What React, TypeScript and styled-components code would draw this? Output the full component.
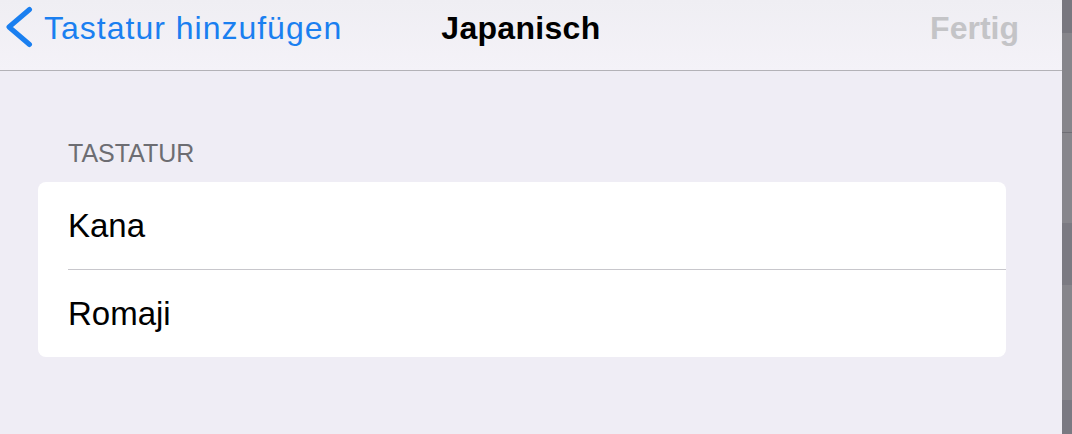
import styled, { createGlobalStyle } from "styled-components";

const GlobalStyle = createGlobalStyle`
  html, body, #root {
    margin: 0;
    height: 100%;
  }
  body {
    font-family: "Liberation Sans", Arial, sans-serif;
    background: #efedf5;
    overflow: hidden;
  }
`;

const keyboards = [
  { id: 1, label: "Kana" },
  { id: 2, label: "Romaji" },
];

// the dark edge on the right of the screen (the iPad split view behind)
const edgeBands = [
  { h: 33, tone: "#78777f" },
  { h: 99, tone: "#86858b" },
  { h: 1, tone: "#6f6e75" },
  { h: 90, tone: "#87868c" },
  { h: 62, tone: "#7b7a82" },
  { h: 115, tone: "#86858b" },
  { h: 34, tone: "#7a7982" },
];

const App = () => {
  return (
    <>
      <GlobalStyle />
      <Screen>
        <Main>
          <NavBar>
            <BackButton>
              <svg width="28" height="42" viewBox="0 0 28 42" fill="none">
                <path
                  d="M24.5 3.5 L4 21 L24.5 38.5"
                  stroke="#1a7ff0"
                  strokeWidth="5"
                  strokeLinecap="round"
                  strokeLinejoin="round"
                />
              </svg>
              <BackLabel>Tastatur hinzufügen</BackLabel>
            </BackButton>
            <Title>Japanisch</Title>
            <Spacer />
            <DoneButton>Fertig</DoneButton>
          </NavBar>

          <Content>
            <SectionHeader>TASTATUR</SectionHeader>
            <Card>
              {keyboards.map((item, i) => (
                <Row key={item.id} $last={i === keyboards.length - 1}>
                  {item.label}
                </Row>
              ))}
            </Card>
          </Content>
        </Main>

        <Edge>
          {edgeBands.map((band, i) => (
            <Band key={i} $h={band.h} $tone={band.tone} />
          ))}
        </Edge>
      </Screen>
    </>
  );
};

const Screen = styled.div`
  display: flex;
  height: 100%;
`;

const Main = styled.div`
  flex: 1;
  display: flex;
  flex-direction: column;
  background: #efedf5;
`;

const NavBar = styled.div`
  display: flex;
  align-items: flex-start;
  height: 71px;
  box-sizing: border-box;
  padding: 10px 43px 0 5px;
  background: linear-gradient(180deg, #efeef3 0%, #f4f2f8 100%);
  border-bottom: 1px solid #b3b2b7;
  flex-shrink: 0;
`;

const BackButton = styled.div`
  display: flex;
  align-items: flex-start;
  gap: 11px;
  color: #1a7ff0;

  svg {
    margin-top: -4px;
  }
`;

const BackLabel = styled.span`
  font-size: 32px;
  line-height: 36px;
  letter-spacing: 1px;
`;

const Title = styled.span`
  margin-left: 99px;
  font-size: 32px;
  line-height: 36px;
  font-weight: 700;
  color: #000;
  letter-spacing: 0.3px;
`;

const Spacer = styled.div`
  flex: 1;
`;

const DoneButton = styled.span`
  font-size: 32px;
  line-height: 36px;
  font-weight: 700;
  color: #c4c4c7;
`;

const Content = styled.div`
  padding: 67px 56px 0 38px;
`;

const SectionHeader = styled.div`
  padding-left: 30px;
  font-size: 25px;
  line-height: 30px;
  color: #6d6d72;
  margin-bottom: 14px;
`;

const Card = styled.div`
  background: #fff;
  border-radius: 8px;
  overflow: hidden;
`;

const Row = styled.div<{ $last: boolean }>`
  display: flex;
  align-items: center;
  height: 87px;
  margin-left: 30px;
  font-size: 33px;
  color: #000;
  border-bottom: ${(p) => (p.$last ? "none" : "1px solid #c8c7cc")};
`;

const Edge = styled.div`
  width: 10px;
  display: flex;
  flex-direction: column;
  flex-shrink: 0;
`;

const Band = styled.div<{ $h: number; $tone: string }>`
  height: ${(p) => p.$h}px;
  background: ${(p) => p.$tone};
  flex-shrink: 0;
`;

export default App;
